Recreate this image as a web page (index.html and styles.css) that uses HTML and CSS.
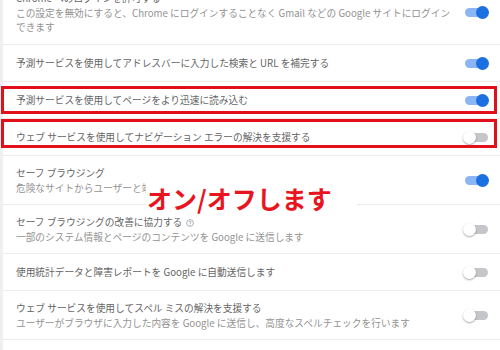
FILE: index.html
```html
<!DOCTYPE html>
<html lang="ja">
<head>
<meta charset="UTF-8">
<title>プライバシーとセキュリティ</title>
<link rel="stylesheet" href="styles.css">
</head>
<body>
<div class="page">
    <!-- 設定カード -->
    <div class="card">
        <div class="row row-first">
            <div class="text text-wide">
                <div class="title">Chrome へのログインを許可する</div>
                <div class="desc">この設定を無効にすると、Chrome にログインすることなく Gmail などの Google サイトにログインできます</div>
            </div>
            <span class="toggle on"></span>
        </div>
        <div class="row">
            <div class="text">
                <div class="title">予測サービスを使用してアドレスバーに入力した検索と URL を補完する</div>
            </div>
            <span class="toggle on"></span>
        </div>
        <div class="row marked marked-a">
            <div class="text">
                <div class="title">予測サービスを使用してページをより迅速に読み込む</div>
            </div>
            <span class="toggle on"></span>
        </div>
        <div class="row marked marked-b">
            <div class="text">
                <div class="title">ウェブ サービスを使用してナビゲーション エラーの解決を支援する</div>
            </div>
            <span class="toggle"></span>
        </div>
        <div class="row row-double">
            <div class="text">
                <div class="title">セーフ ブラウジング</div>
                <div class="desc">危険なサイトからユーザーと端末を保護します</div>
            </div>
            <span class="toggle on"></span>
        </div>
        <div class="row row-double">
            <div class="text">
                <div class="title">セーフ ブラウジングの改善に協力する
                    <svg class="help" width="8" height="8" viewBox="0 0 16 16"><circle cx="8" cy="8" r="6.8" fill="none" stroke="#9aa0a6" stroke-width="1.6"/><path d="M6 6.3a2 2 0 1 1 2.6 1.9c-.5.2-.6.5-.6 1V10" fill="none" stroke="#9aa0a6" stroke-width="1.6"/><circle cx="8" cy="12" r="1" fill="#9aa0a6"/></svg>
                </div>
                <div class="desc">一部のシステム情報とページのコンテンツを Google に送信します</div>
            </div>
            <span class="toggle"></span>
        </div>
        <div class="row">
            <div class="text">
                <div class="title">使用統計データと障害レポートを Google に自動送信します</div>
            </div>
            <span class="toggle"></span>
        </div>
        <div class="row row-double">
            <div class="text">
                <div class="title">ウェブ サービスを使用してスペル ミスの解決を支援する</div>
                <div class="desc">ユーザーがブラウザに入力した内容を Google に送信し、高度なスペルチェックを行います</div>
            </div>
            <span class="toggle"></span>
        </div>
        <div class="row">
            <div class="text">
                <div class="title">閲覧トラフィックと一緒に「トラッキング拒否」リクエストを送信する</div>
            </div>
            <span class="toggle"></span>
        </div>
    </div>

    <!-- 注釈 -->
    <div class="callout">オン/オフします</div>
</div>
</body>
</html>
```

FILE: styles.css
```css
/* 全体 */
body, html {
    margin: 0;
    padding: 0;
    background: #eeeff0;
    font-family: 'Noto Sans CJK JP', 'Noto Sans', sans-serif;
}

.page {
    position: relative;
    display: flow-root;
    height: 350px;
    overflow: hidden;
    padding-left: 3px;
}

/* 設定カード */
.card {
    background: #ffffff;
    margin-top: -19px;
}

.row {
    position: relative;
    display: flex;
    align-items: center;
    box-sizing: border-box;
    height: 37px;
    padding: 0 12px 0 13px;
    border-bottom: 1px solid #ececec;
}

.row-first {
    height: 64px;
}

.row-double {
    height: 49px;
}

.text {
    flex: 1;
    margin-right: 20px;
}

.text-wide {
    margin-right: 9px;
}

.title {
    font-size: 9.7px;
    line-height: 15px;
    color: #646464;
}

.desc {
    font-size: 9.7px;
    line-height: 14px;
    color: #939393;
}

.help {
    vertical-align: -1px;
    margin-left: 2px;
}

/* トグル */
.toggle {
    position: relative;
    width: 23px;
    height: 9px;
    border-radius: 5px;
    background: #c4c6ca;
    flex-shrink: 0;
}

.toggle::after {
    content: '';
    position: absolute;
    top: -2px;
    left: -2px;
    width: 13px;
    height: 13px;
    border-radius: 50%;
    background: #ffffff;
    box-shadow: 0 1px 2px rgba(0, 0, 0, 0.35);
}

.toggle.on {
    background: #8cb5f5;
}

.toggle.on::after {
    left: auto;
    right: -1px;
    background: #1b6fe0;
    box-shadow: none;
}

/* 赤枠 */
.marked::after {
    content: '';
    position: absolute;
    left: -2px;
    right: 3px;
    border: 3px solid #e3101c;
    pointer-events: none;
}

.marked-a::after {
    top: 4px;
    bottom: 4px;
}

.marked-b::after {
    top: 0;
    bottom: 7px;
}

/* 注釈テキスト */
.callout {
    position: absolute;
    left: 146px;
    top: 181px;
    width: 211px;
    height: 33px;
    background: #ffffff;
    color: #e8141e;
    font-size: 25px;
    font-weight: 700;
    line-height: 35px;
    padding-left: 1px;
    box-sizing: border-box;
}
```
